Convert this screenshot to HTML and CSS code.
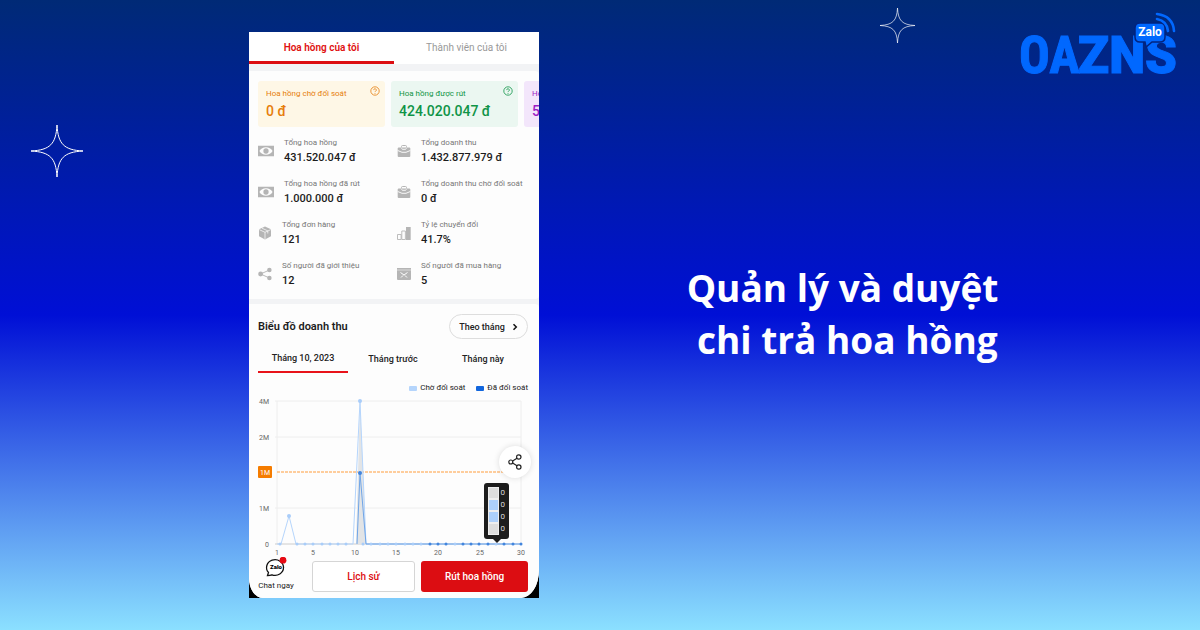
FILE: index.html
```html
<!DOCTYPE html>
<html lang="vi">
<head>
    <meta charset="UTF-8">
    <meta name="viewport" content="width=device-width, initial-scale=1.0">
    <title>OA ZNS - Quản lý và duyệt chi trả hoa hồng</title>
    <link rel="stylesheet" href="styles.css">
</head>
<body>

<!-- Shared icons -->
<svg class="sprite" aria-hidden="true">
    <symbol id="star" viewBox="0 0 52 52">
        <path d="M26 0C27 19 33 25 52 26C33 27 27 33 26 52C25 33 19 27 0 26C19 25 25 19 26 0Z" fill="none" stroke="#fff" stroke-width="1"/>
    </symbol>
    <symbol id="help" viewBox="0 0 10 10">
        <circle cx="5" cy="5" r="4.200" fill="none" stroke="currentColor" stroke-width=".8"/>
        <path d="M3.700 4.100a1.300 1.300 0 1 1 1.900 1.100q-.6.300-.6.900M5 7v.8" fill="none" stroke="currentColor" stroke-width=".8"/>
    </symbol>
    <symbol id="money" viewBox="0 0 17 14">
        <path fill-rule="evenodd" d="M0 1.500h17v11H0zM1.500 7Q4 3 8.500 3T15.500 7Q13 11 8.500 11T1.500 7Z"/>
        <circle cx="8.500" cy="7" r="2.800"/>
    </symbol>
    <symbol id="bag" viewBox="0 0 14 14">
        <path d="M4.500 3.500v-1q0-1 1-1h3q1 0 1 1v1" fill="none" stroke="currentColor"/>
        <path d="M1.700 3.500h10.600q1 0 1 1V12q0 1-1 1H1.700q-1 0-1-1V4.500q0-1 1-1Z"/>
        <path d="M.7 6.500 5 8.300h4l4.300-1.800M4.300 4.200 6 5.600l1-.6 1 .6 1.700-1.400" fill="none" stroke="#fff" stroke-width=".9"/>
    </symbol>
    <symbol id="box" viewBox="0 0 14 14">
        <path d="M7 .6 13 3.300v7L7 13.400 1 10.300v-7Z"/>
        <path d="M1.200 3.600 7 6.300l5.800-2.700M7 6.300v6.800M4 2.200l5.800 2.700v2.600" fill="none" stroke="#fff" stroke-width=".7"/>
    </symbol>
    <symbol id="bars" viewBox="0 0 14 14">
        <path d="M.5 8.500h3.600v5H.5zM4.800 5h3.600v8.500H4.800z" fill="none" stroke="currentColor" stroke-width=".9"/>
        <path d="M9 1h4.700v13H9z"/>
    </symbol>
    <symbol id="nodes" viewBox="0 0 15 14">
        <path d="M12 2.800 2.800 7 12 11.200" fill="none" stroke="currentColor"/>
        <circle cx="2.800" cy="7" r="2.600"/><circle cx="12.200" cy="2.600" r="2.400"/><circle cx="12.200" cy="11.400" r="2.400"/>
    </symbol>
    <symbol id="package" viewBox="0 0 14 14">
        <path d="M0 1h14v1.700H0zM0 3.300h14V12q0 1-1 1H1q-1 0-1-1Z"/>
        <path d="M3.500 5.500 7 8l3.500-2.500M4 10.500l2-2M10 10.500l-2-2" fill="none" stroke="#fff"/>
    </symbol>
</svg>

<main class="banner">
    <div class="left">
        <svg class="star-big" aria-hidden="true"><use href="#star"/></svg>
    </div>

    <section class="phone">
        <div class="screen">
            <nav class="tabs">
                <a href="#" class="tab active">Hoa hồng của tôi</a>
                <a href="#" class="tab">Thành viên của tôi</a>
            </nav>

            <div class="panel overview">
                <div class="cards">
                    <div class="card orange">
                        <span class="card-label">Hoa hồng chờ đối soát</span>
                        <svg class="help"><use href="#help"/></svg>
                        <strong>0 đ</strong>
                    </div>
                    <div class="card green">
                        <span class="card-label">Hoa hồng được rút</span>
                        <svg class="help"><use href="#help"/></svg>
                        <strong>424.020.047 đ</strong>
                    </div>
                    <div class="card purple">
                        <span class="card-label">Hoa</span>
                        <strong>5</strong>
                    </div>
                </div>

                <div class="stats">
                    <div class="stat money">
                        <svg><use href="#money"/></svg>
                        <p>Tổng hoa hồng<b>431.520.047 đ</b></p>
                    </div>
                    <div class="stat">
                        <svg><use href="#bag"/></svg>
                        <p>Tổng doanh thu<b>1.432.877.979 đ</b></p>
                    </div>
                    <div class="stat money">
                        <svg><use href="#money"/></svg>
                        <p>Tổng hoa hồng đã rút<b>1.000.000 đ</b></p>
                    </div>
                    <div class="stat">
                        <svg><use href="#bag"/></svg>
                        <p>Tổng doanh thu chờ đối soát<b>0 đ</b></p>
                    </div>
                    <div class="stat">
                        <svg><use href="#box"/></svg>
                        <p>Tổng đơn hàng<b>121</b></p>
                    </div>
                    <div class="stat">
                        <svg><use href="#bars"/></svg>
                        <p>Tỷ lệ chuyển đổi<b>41.7%</b></p>
                    </div>
                    <div class="stat">
                        <svg><use href="#nodes"/></svg>
                        <p>Số người đã giới thiệu<b>12</b></p>
                    </div>
                    <div class="stat">
                        <svg><use href="#package"/></svg>
                        <p>Số người đã mua hàng<b>5</b></p>
                    </div>
                </div>
            </div>

            <div class="panel revenue">
                <div class="revenue-head">
                    <h2>Biểu đồ doanh thu</h2>
                    <button class="period">Theo tháng
                        <svg viewBox="0 0 6 8"><path d="M1.500 1.200 4.300 4 1.500 6.800" fill="none" stroke="#111" stroke-width="1.500"/></svg>
                    </button>
                </div>
                <div class="months">
                    <button class="month active">Tháng 10, 2023</button>
                    <button class="month">Tháng trước</button>
                    <button class="month">Tháng này</button>
                </div>
                <div class="legend">
                    <span class="pending">Chờ đối soát</span>
                    <span class="checked">Đã đối soát</span>
                </div>

                <div class="chart">
                    <svg viewBox="0 0 270 164" role="img" aria-label="Biểu đồ doanh thu">
                        <g class="grid">
                            <path d="M17 7H263M17 43H263M17 114H263"/>
                            <path d="M19 7V150M263 7V150"/>
                            <path class="axis" d="M17 150H263"/>
                        </g>
                        <path class="limit" d="M19 78H263"/>
                        <path class="area" d="M98 150 102 7 108 150Z"/>
                        <path class="line light" d="M19 150H23L31 122 38 150H95L102 7 108 150H263"/>
                        <path class="line dark" d="M99 150 102 79 108 150H263"/>
                        <g id="dots"></g>
                        <circle class="light" cx="31" cy="122" r="2"/>
                        <circle class="light" cx="102" cy="7" r="2"/>
                        <circle class="dark" cx="102" cy="79" r="2"/>
                        <rect x="0" y="72" width="14" height="12" rx="1" fill="#f57c00"/>
                        <text x="7" y="81" class="mark">1M</text>
                        <g class="y-labels">
                            <text x="11" y="10">4M</text>
                            <text x="11" y="46">2M</text>
                            <text x="11" y="117">1M</text>
                            <text x="11" y="153">0</text>
                        </g>
                        <g class="x-labels">
                            <text x="19" y="161">1</text>
                            <text x="55" y="161">5</text>
                            <text x="97" y="161">10</text>
                            <text x="138" y="161">15</text>
                            <text x="180" y="161">20</text>
                            <text x="222" y="161">25</text>
                            <text x="263" y="161">30</text>
                        </g>
                    </svg>
                    <div class="tooltip">
                        <span class="gray">0</span>
                        <span>0</span>
                        <span>0</span>
                        <span class="gray">0</span>
                    </div>
                    <button class="share" aria-label="Chia sẻ">
                        <svg viewBox="0 0 14 16" fill="none" stroke="#222" stroke-width="1.200">
                            <circle cx="2.800" cy="8" r="2"/><circle cx="10.800" cy="3" r="2.200"/><circle cx="10.800" cy="13" r="2.200"/>
                            <path d="M4.600 7 9 4.300M4.600 9 9 11.800"/>
                        </svg>
                    </button>
                </div>

                <footer class="actions">
                    <a href="#" class="chat">
                        <svg viewBox="0 0 24 20">
                            <path d="M3.500 18.500 4.500 15.500A8.500 7.800 0 1 1 8 17.800Q6 18.500 3.500 18.500Z" fill="#fff" stroke="#111" stroke-width="1.300"/>
                            <text x="12" y="12">Zalo</text>
                            <circle cx="19" cy="3.200" r="3.400" fill="#e60a14"/>
                        </svg>
                        Chat ngay
                    </a>
                    <button class="history">Lịch sử</button>
                    <button class="withdraw">Rút hoa hồng</button>
                </footer>
            </div>
        </div>
    </section>

    <div class="right">
        <header class="top">
            <svg class="star-small" aria-hidden="true"><use href="#star"/></svg>
            <svg class="logo" viewBox="0 0 164 70" role="img" aria-label="OA ZNS Zalo">
                <g class="logo-text">
                    <text x="3" y="65">OA</text>
                    <text x="62" y="65" class="logo-wide">ZNS</text>
                </g>
                <path d="M124 15h20q5 0 5 5v9q0 5-5 5h-8l-6 5-1-5h-5q-5 0-5-5v-9q0-5 5-5Z" fill="#0068ff" stroke="#00237f" stroke-width="1.500"/>
                <text x="134" y="28" class="logo-zalo">Zalo</text>
                <g fill="none" stroke="#0068ff" stroke-width="2.600" stroke-linecap="round">
                    <path d="M141 6Q157 8 158 23"/>
                    <path d="M141 11Q151 13 152 23"/>
                </g>
            </svg>
        </header>
        <h1>Quản lý và duyệt<br>&nbsp;chi trả hoa hồng</h1>
    </div>
</main>

<script>
    // Daily points along the bottom of the chart
    const dots = document.getElementById('dots');
    for (let day = 1; day <= 30; day++) {
        if (day === 2 || day === 10) continue;
        const dot = document.createElementNS('http://www.w3.org/2000/svg', 'circle');
        dot.setAttribute('cx', Math.round(22 + (day - 1) * 8.31));
        dot.setAttribute('cy', 150);
        dot.setAttribute('r', 1.5);
        dot.setAttribute('class', day >= 19 && day !== 22 && day !== 27 ? 'dark' : 'light');
        dots.appendChild(dot);
    }
</script>

</body>
</html>
```
FILE: styles.css
```css
* {
    box-sizing: border-box;
}

body {
    margin: 0;
    font-family: Roboto, Arial, sans-serif;
    background: linear-gradient(#002a76, #000fd6 50%, #8be0ff);
    min-height: 100vh;
}

h1, h2, p {
    margin: 0;
}

a {
    text-decoration: none;
}

button {
    font-family: inherit;
    padding: 0;
    border: none;
    background: none;
    cursor: pointer;
}

.sprite {
    display: none;
}

.banner {
    display: grid;
    grid-template-columns: 249fr 290px 661fr;
}

.left {
    padding: 125px 0 0 31px;
}

.star-big {
    width: 52px;
    height: 52px;
}

/* Phone */
.phone {
    margin: 32px 0;
    background: #000;
}

.screen {
    background: #f2f3f5;
    border-radius: 0 0 18px 14px / 0 0 28px 20px;
    overflow: hidden;
}

.tabs {
    display: flex;
    background: #fff;
    margin-bottom: 7px;
}

.tab {
    flex: 1;
    height: 32px;
    line-height: 32px;
    font-size: 10px;
    text-align: center;
    color: #999;
}

.tab.active {
    color: #e01010;
    font-weight: 600;
    border-bottom: 3px solid #dc0d12;
}

.panel {
    background: #fdfdfd;
    padding: 10px 11px 0 9px;
    border-radius: 0 4px 4px 0;
}

.overview {
    padding-right: 0;
    padding-bottom: 10px;
    margin-bottom: 5px;
}

.cards {
    display: flex;
    gap: 6px;
    overflow: hidden;
}

.card {
    flex: 0 0 127px;
    height: 46px;
    padding: 5px 5px 0 8px;
    border-radius: 3px;
    display: grid;
    grid-template-columns: 1fr 10px;
    grid-template-rows: 15px 20px;
}

.card-label {
    font-size: 8px;
    line-height: 15px;
    white-space: nowrap;
}

.card strong {
    grid-column: 1 / -1;
    font-size: 14px;
    line-height: 21px;
    font-weight: 500;
    white-space: nowrap;
}

.card .help {
    width: 10px;
    height: 10px;
}

.orange {
    color: #e67e0c;
    background: #fef7e6;
}

.green {
    color: #0f9447;
    background: #ebf7f1;
}

.purple {
    grid-template-columns: 1fr;
    color: #9c1fc4;
    background: #f3e6fb;
}

.stats {
    display: grid;
    grid-template-columns: 139px 1fr;
    row-gap: 11px;
    padding-top: 9px;
}

.stat {
    display: flex;
    align-items: center;
    gap: 10px;
    color: #b5b5b5;
}

.stat svg {
    width: 14px;
    height: 14px;
    fill: currentColor;
}

.stat.money svg {
    width: 16px;
}

.stat p {
    color: #777;
    font-size: 8px;
    line-height: 14px;
}

.stat b {
    display: block;
    color: #1c1c1c;
    font-size: 11px;
    line-height: 16px;
    font-weight: 500;
}

/* Revenue chart */
.revenue-head {
    display: flex;
    align-items: center;
    justify-content: space-between;
}

h2 {
    font-size: 11px;
    font-weight: 600;
    color: #1c1c1c;
}

.period {
    width: 79px;
    height: 25px;
    border: 1px solid #ddd;
    border-radius: 13px;
    display: flex;
    align-items: center;
    justify-content: center;
    gap: 7px;
    font-size: 9px;
    font-weight: 500;
    color: #222;
}

.period svg {
    width: 6px;
    height: 8px;
}

.months {
    display: grid;
    grid-template-columns: repeat(3, 1fr);
    margin-top: 6px;
}

.month {
    height: 28px;
    font-size: 9px;
    font-weight: 500;
    color: #222;
}

.month.active {
    border-bottom: 2px solid #e8131a;
}

.legend {
    display: flex;
    justify-content: flex-end;
    gap: 11px;
    margin-top: 9px;
    font-size: 8px;
    line-height: 12px;
    color: #222;
}

.legend span {
    display: flex;
    align-items: center;
    gap: 3px;
}

.legend span::before {
    content: "";
    width: 8px;
    height: 5px;
    border-radius: 1px;
    background: #b5d5fc;
}

.legend .checked::before {
    background: #1266dd;
}

.chart {
    position: relative;
}

.chart > svg {
    display: block;
    width: 100%;
}

.chart text {
    font-size: 7px;
    fill: #666;
}

.grid path {
    stroke: #eee;
    stroke-width: 1;
}

.grid .axis {
    stroke: #ccc;
}

.limit {
    stroke: #ff9d3c;
    stroke-dasharray: 3 1;
}

.area {
    fill: #e2e4e6;
}

.line {
    fill: none;
    stroke-width: 1;
}

.line.light {
    stroke: #b5d5fc;
}

.line.dark {
    stroke: #6fa5e8;
}

circle.light {
    fill: #a9cdf9;
}

circle.dark {
    fill: #4285dd;
}

.chart .mark {
    fill: #fff;
    text-anchor: middle;
}

.y-labels {
    text-anchor: end;
}

.x-labels {
    text-anchor: middle;
}

.tooltip {
    position: absolute;
    right: 19px;
    top: 89px;
    width: 25px;
    height: 56px;
    padding: 4px;
    border-radius: 3px;
    background: #1d1d1d;
    color: #ddd;
    font-size: 8px;
    line-height: 12px;
}

.tooltip::after {
    content: "";
    position: absolute;
    top: 56px;
    left: 9px;
    border: 4px solid transparent;
    border-top-color: #1d1d1d;
    border-bottom: none;
}

.tooltip span {
    display: flex;
    align-items: center;
    gap: 2px;
}

.tooltip span::before {
    content: "";
    width: 10px;
    height: 10px;
    border: 1px solid #eee;
    background: #add0fb;
}

.tooltip .gray::before {
    background: #ddd;
}

.share {
    position: absolute;
    right: -3px;
    top: 52px;
    width: 32px;
    height: 32px;
    border-radius: 50%;
    background: #fff;
    box-shadow: 0 0 6px #0002;
    display: flex;
    align-items: center;
    justify-content: center;
}

.share svg {
    width: 14px;
    height: 16px;
}

/* Bottom actions */
.actions {
    display: grid;
    grid-template-columns: 48px 103px 1fr;
    column-gap: 6px;
    height: 40px;
    padding-top: 3px;
}

.chat {
    display: flex;
    flex-direction: column;
    align-items: center;
    gap: 2px;
    margin: -4px 12px 0 0;
    font-size: 8px;
    line-height: 14px;
    color: #222;
    white-space: nowrap;
}

.chat svg {
    flex: none;
    width: 24px;
    height: 20px;
}

.chat text {
    font-size: 6px;
    font-weight: 900;
    text-anchor: middle;
}

.history, .withdraw {
    height: 31px;
    border-radius: 3px;
    font-size: 10px;
    font-weight: 500;
}

.history {
    border: 1px solid #d5d5d5;
    background: #fff;
    color: #dc0d12;
}

.withdraw {
    background: #dc0d12;
    color: #fff;
}

/* Right side */
.top {
    display: flex;
    justify-content: flex-end;
    align-items: flex-start;
    padding: 8px 20px 0 0;
}

.star-small {
    width: 35px;
    height: 35px;
    margin-right: 101px;
}

.logo {
    width: 164px;
    height: 70px;
    overflow: visible;
}

.logo-text {
    font-family: "Liberation Sans Narrow", "Roboto Condensed", Roboto, sans-serif;
    font-size: 51px;
    font-weight: 700;
    fill: #0068ff;
    stroke: #0068ff;
    stroke-width: 1;
}

.logo-wide {
    font-family: Roboto, sans-serif;
    font-weight: 900;
}

.logo-zalo {
    font-size: 12px;
    font-weight: 700;
    text-anchor: middle;
    fill: #fff;
}

h1 {
    padding: 184px 54px 0 0;
    font-family: "Open Sans", "Noto Sans", sans-serif;
    font-size: 37px;
    line-height: 52px;
    font-weight: 700;
    text-align: center;
    color: #fff;
}
```
